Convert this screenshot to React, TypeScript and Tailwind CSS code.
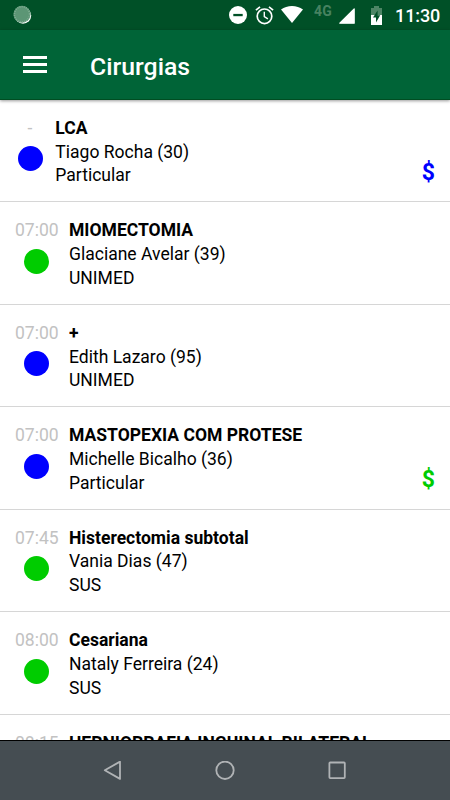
type Surgery = {
  time: string;
  title: string;
  patient: string;
  plan: string;
  dot: string;
  money?: string;
};

const BLUE = 'bg-[#0000ff]';
const GREEN = 'bg-[#00cc00]';

const surgeries: Surgery[] = [
  { time: '-', title: 'LCA', patient: 'Tiago Rocha (30)', plan: 'Particular', dot: BLUE, money: 'text-[#0000ff]' },
  { time: '07:00', title: 'MIOMECTOMIA', patient: 'Glaciane Avelar (39)', plan: 'UNIMED', dot: GREEN },
  { time: '07:00', title: '+', patient: 'Edith Lazaro (95)', plan: 'UNIMED', dot: BLUE },
  { time: '07:00', title: 'MASTOPEXIA COM PROTESE', patient: 'Michelle Bicalho (36)', plan: 'Particular', dot: BLUE, money: 'text-[#00cc00]' },
  { time: '07:45', title: 'Histerectomia subtotal', patient: 'Vania Dias (47)', plan: 'SUS', dot: GREEN },
  { time: '08:00', title: 'Cesariana', patient: 'Nataly Ferreira (24)', plan: 'SUS', dot: GREEN },
  { time: '08:15', title: 'HERNIORRAFIA INGUINAL BILATERAL', patient: '', plan: '', dot: GREEN },
];

function StatusBar() {
  return (
    <div className="flex h-[30px] shrink-0 items-start bg-[#005027] text-white">
      <svg className="ml-3 mt-[5px] size-5" viewBox="0 0 20 20">
        <circle cx="11" cy="10.5" r="8.2" fill="#fff" />
        <circle cx="10" cy="9.3" r="8.5" fill="#5c9675" />
        <circle cx="10" cy="9.3" r="7.6" fill="none" stroke="#80ad93" strokeWidth="1.6" strokeDasharray="1 1.2" />
      </svg>
      <svg className="ml-[197px] mt-[6px] h-[18px] w-[18px]" viewBox="0 0 18 18">
        <circle cx="9" cy="9" r="9" fill="#fff" />
        <rect x="4.3" y="7.9" width="9.4" height="2.3" fill="#005027" />
      </svg>
      <svg className="ml-[8px] mt-[6px] h-[19px] w-[19px]" viewBox="0 0 19 19" fill="none" stroke="#fff">
        <circle cx="9.5" cy="10.3" r="7.3" strokeWidth="1.7" />
        <path d="M9.3 5.7V10.7L12.9 12.9" strokeWidth="1.4" />
        <path d="M.9 4.2L5 .8M18.1 4.2L14 .8" strokeWidth="1.7" />
      </svg>
      <svg className="ml-[7px] mt-[6px] h-[17px] w-[22px]" viewBox="0 0 22 17">
        <path d="M11 17L0 3.6Q4.8 0 11 0T22 3.6Z" fill="#fff" />
      </svg>
      <span className="ml-[11px] mt-[3px] w-[19px] text-[14px] leading-4 font-bold tracking-[0.3px] whitespace-nowrap text-[#478260]">4G</span>
      <svg className="ml-[6px] mt-[8px] h-4 w-4" viewBox="0 0 16 16">
        <path d="M.8 15.2L15.2 .8V15.2Z" fill="#fff" stroke="#fff" strokeWidth="1.2" strokeLinejoin="round" />
      </svg>
      <svg className="ml-[16px] mt-[6px] h-[19px] w-[11px]" viewBox="0 0 11 19">
        <path d="M0 2H3V0H8V2H11V9H0Z" fill="#4d8565" />
        <path d="M0 9H11V19H0Z" fill="#fff" />
        <path d="M6.6 4.5L2 11.4H5V16.5L9.2 9.2H6.6Z" fill="#005027" />
      </svg>
      <span className="ml-[13px] mt-[4px] text-[18px] leading-6 font-medium tracking-[-0.1px]">11:30</span>
    </div>
  );
}

function AppBar() {
  return (
    <header className="relative z-10 flex h-[70px] shrink-0 items-center border-b border-[#004d22] bg-[#006437] text-white shadow-[0_1px_3px_rgba(0,0,0,0.4)]">
      <button aria-label="Menu" className="ml-[23px] flex w-6 flex-col gap-[4px]">
        <span className="h-[3px] bg-white" />
        <span className="h-[3px] bg-white" />
        <span className="h-[3px] bg-white" />
      </button>
      <h1 className="ml-[43px] mt-[4px] text-[24.8px] leading-8 font-medium">Cirurgias</h1>
    </header>
  );
}

function SurgeryRow({ item }: { item: Surgery }) {
  return (
    <li className="flex h-[102.45px] shrink-0 border-b border-[#d6d6d6] pt-[17px] pl-[15px] text-[17.55px] leading-[23.7px]">
      <div className="flex min-w-[30px] flex-col items-center">
        <span className="text-[#c2c2c2]">{item.time}</span>
        <span className={'mt-[5.7px] size-[25px] rounded-full ' + item.dot} />
      </div>
      <div className="ml-[10.3px] flex flex-1 flex-col text-black">
        <span className="font-bold whitespace-nowrap">{item.title}</span>
        <span>{item.patient}</span>
        <span>{item.plan}</span>
      </div>
      {item.money && <span className={'mr-[15px] mt-[42px] text-[23px] leading-7 font-bold ' + item.money}>$</span>}
    </li>
  );
}

function NavigationBar() {
  return (
    <nav className="flex h-[60px] shrink-0 items-center justify-center gap-[92px] border-t border-black bg-[#454d52]">
      <svg className="size-5" viewBox="0 0 20 20" fill="none" stroke="#b0b3b5" strokeWidth="1.8" strokeLinejoin="round">
        <path d="M17 .6V17.9L1.8 9.2Z" />
      </svg>
      <svg className="size-5" viewBox="0 0 20 20" fill="none" stroke="#b0b3b5" strokeWidth="1.8">
        <circle cx="10" cy="9.3" r="8.7" />
      </svg>
      <svg className="size-5" viewBox="0 0 20 20" fill="none" stroke="#b0b3b5" strokeWidth="1.8">
        <rect x="2.4" y="1.5" width="15.4" height="15.6" rx=".8" />
      </svg>
    </nav>
  );
}

export default function App() {
  return (
    <div className="flex h-[800px] w-[450px] flex-col overflow-hidden bg-white font-[Roboto,sans-serif]">
      <StatusBar />
      <AppBar />
      <ul className="flex min-h-0 flex-1 flex-col overflow-hidden">
        {surgeries.map((item, i) => (
          <SurgeryRow key={i} item={item} />
        ))}
      </ul>
      <NavigationBar />
    </div>
  );
}
